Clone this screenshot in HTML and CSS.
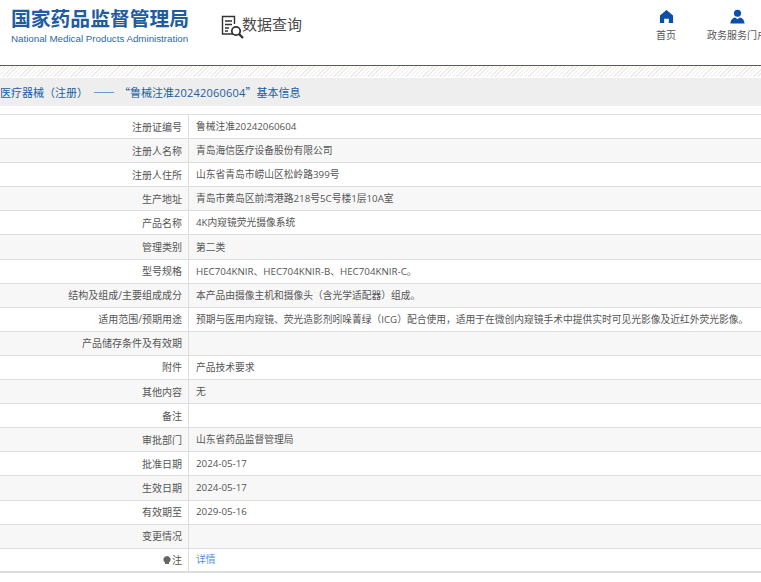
FILE: index.html
```html
<!DOCTYPE html>
<html lang="zh">
<head>
<meta charset="utf-8">
<title>数据查询</title>
<link rel="stylesheet" href="styles.css">
</head>
<body>
<header class="site-header">
  <div class="brand">
    <div class="brand-cn">国家药品监督管理局</div>
    <div class="brand-en">National Medical Products Administration</div>
  </div>
  <div class="query">
    <svg class="query-icon" viewBox="0 0 24 24" width="24" height="24" fill="none" stroke="#333" stroke-width="1.4">
      <path d="M13 19H2.500V1.500h12V9"/>
      <path d="M5 6h7M5 9.500h7M5 13h4M5 16h3"/>
      <circle cx="16" cy="16" r="4.200" stroke-width="1.800"/>
      <path d="M19 19l4 4" stroke-width="2.400"/>
    </svg>
    <span class="query-text">数据查询</span>
  </div>
  <nav class="top-nav">
    <a class="nav-item nav-home">
      <svg viewBox="0 0 16 16" width="15" height="15"><path fill="#0b4fa8" d="M8 1 15 7V15H10.500V10.500H5.500V15H1V7Z"/></svg>
      <span>首页</span>
    </a>
    <a class="nav-item nav-portal">
      <svg viewBox="0 0 16 16" width="15" height="15"><circle cx="8" cy="4.500" r="3.800" fill="#0b4fa8"/><path fill="#0b4fa8" d="M0.500 15.500c0-4 2.500-6 5-6.500L8 11l2.500-2c2.500.5 5 2.500 5 6.500Z"/></svg>
      <span>政务服务门户</span>
    </a>
  </nav>
</header>
<div class="stripe"></div>
<h1 class="page-title">医疗器械（注册）<span class="cjk dash">——</span><span class="cjk quote">“</span>鲁械注准<span class="num">20242060604</span><span class="cjk">”</span>基本信息</h1>
<table class="info">
  <tbody>
    <tr><th>注册证编号</th><td>鲁械注准20242060604</td></tr>
    <tr><th>注册人名称</th><td>青岛海信医疗设备股份有限公司</td></tr>
    <tr><th>注册人住所</th><td>山东省青岛市崂山区松岭路399号</td></tr>
    <tr><th>生产地址</th><td>青岛市黄岛区前湾港路218号5C号楼1层10A室</td></tr>
    <tr><th>产品名称</th><td>4K内窥镜荧光摄像系统</td></tr>
    <tr><th>管理类别</th><td>第二类</td></tr>
    <tr><th>型号规格</th><td>HEC704KNIR、HEC704KNIR-B、HEC704KNIR-C。</td></tr>
    <tr><th>结构及组成/主要组成成分</th><td>本产品由摄像主机和摄像头（含光学适配器）组成。</td></tr>
    <tr><th>适用范围/预期用途</th><td>预期与医用内窥镜、荧光造影剂吲哚菁绿（ICG）配合使用，适用于在微创内窥镜手术中提供实时可见光影像及近红外荧光影像。</td></tr>
    <tr><th>产品储存条件及有效期</th><td></td></tr>
    <tr><th>附件</th><td>产品技术要求</td></tr>
    <tr><th>其他内容</th><td>无</td></tr>
    <tr><th>备注</th><td></td></tr>
    <tr><th>审批部门</th><td>山东省药品监督管理局</td></tr>
    <tr><th>批准日期</th><td>2024-05-17</td></tr>
    <tr><th>生效日期</th><td>2024-05-17</td></tr>
    <tr><th>有效期至</th><td>2029-05-16</td></tr>
    <tr><th>变更情况</th><td></td></tr>
    <tr><th><svg class="bulb" viewBox="0 0 8 9" width="8" height="9"><path fill="#666" d="M4 0a3.600 3.600 0 0 1 2 6.600V8H2V6.600A3.600 3.600 0 0 1 4 0Z"/></svg>注</th><td><a class="detail">详情</a></td></tr>
  </tbody>
</table>
</body>
</html>
```
FILE: styles.css
```css
html, body {
  margin: 0;
  padding: 0;
  height: 582px;
  overflow: hidden;
  background: #fff;
  font-family: "Open Sans", "Noto Sans CJK SC", sans-serif;
  color: #555;
}
.site-header {
  display: flex;
  height: 65px;
  box-sizing: border-box;
}
.brand {
  width: 220px;
  padding: 7px 0 0 11px;
  box-sizing: border-box;
  flex: none;
}
.brand-cn {
  font-size: 19.800px;
  line-height: 24px;
  font-weight: 700;
  color: #215c9f;
  white-space: nowrap;
}
.brand-en {
  margin-top: 1px;
  font-family: "Liberation Sans", sans-serif;
  font-size: 9.750px;
  line-height: 13px;
  color: #2a6aa8;
  white-space: nowrap;
}
.query {
  display: flex;
  align-items: flex-start;
  padding-top: 14px;
  flex: none;
}
.query-icon { flex: none; margin-top: 1px; }
.query-text {
  font-size: 15px;
  line-height: 20px;
  color: #4a4a4a;
  margin-left: -2px;
}
.top-nav {
  margin-left: auto;
  display: flex;
  width: 239px;
  flex: none;
  box-sizing: border-box;
  padding: 9px 0 0 134px;
  white-space: nowrap;
}
.nav-item {
  display: flex;
  flex-direction: column;
  align-items: center;
  font-size: 10px;
  line-height: 14px;
  color: #555;
}
.nav-item svg { margin-bottom: 4px; }
.nav-home { width: 20px; }
.nav-portal { width: 60px; margin-left: 31px; flex: none; }
.stripe {
  height: 11px;
  border-top: 1px solid #1a6fa5;
  background: repeating-linear-gradient(135deg, #ececec 0 1px, #fff 1px 3px);
}
.page-title {
  margin: 1px 0 8px;
  height: 28px;
  background: #eee;
  font-size: 11px;
  line-height: 28px;
  font-weight: 400;
  color: #215c9f;
  white-space: nowrap;
}
.cjk { font-family: "Noto Sans CJK SC", sans-serif; }
.dash { margin-left: 5px; }
.quote { margin-left: 4px; }
.num { letter-spacing: 0.2px; }
.info {
  width: 100%;
  border-collapse: collapse;
  table-layout: fixed;
  font-size: 10px;
  border-top: 1px solid #ddd;
  border-bottom: 2px solid #ddd;
}
.info tr { height: 24.100px; }
.info tr:nth-child(even) { background: #f7f7f7; }
.info th, .info td {
  padding: 0 0 1px;
  border-bottom: 1px solid #ddd;
  font-weight: 400;
  white-space: nowrap;
  overflow: visible;
}
.info th {
  width: 182px;
  padding-right: 6px;
  text-align: right;
  border-right: 1px solid #ddd;
  box-sizing: content-box;
}
.info td { padding-left: 7px; font-size: 9.750px; }
.detail { color: #4a8fe0; }
.bulb {
  margin-right: 1px;
  vertical-align: -1px;
}
```
